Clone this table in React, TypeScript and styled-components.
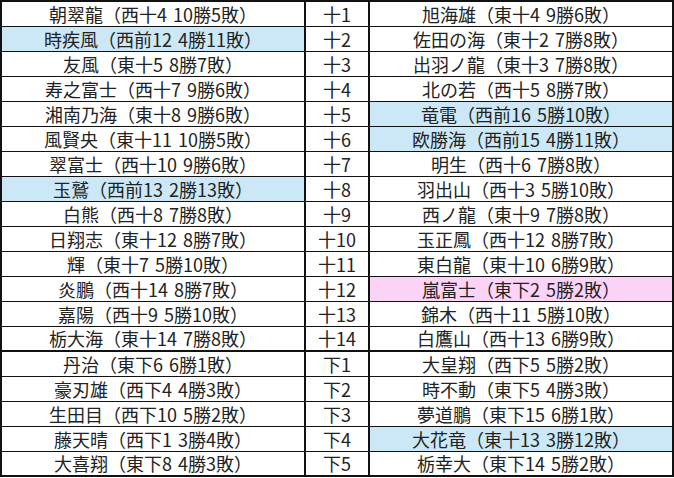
import React from "react";
import styled, { createGlobalStyle } from "styled-components";

type Tone = "blue" | "pink" | undefined;

interface Bout {
  left: string;
  rank: string;
  right: string;
  leftTone?: Tone;
  rightTone?: Tone;
}

const bouts: Bout[] = [
  { left: "朝翠龍（西十4 10勝5敗）", rank: "十1", right: "旭海雄（東十4 9勝6敗）" },
  { left: "時疾風（西前12 4勝11敗）", rank: "十2", right: "佐田の海（東十2 7勝8敗）", leftTone: "blue" },
  { left: "友風（東十5 8勝7敗）", rank: "十3", right: "出羽ノ龍（東十3 7勝8敗）" },
  { left: "寿之富士（西十7 9勝6敗）", rank: "十4", right: "北の若（西十5 8勝7敗）" },
  { left: "湘南乃海（東十8 9勝6敗）", rank: "十5", right: "竜電（西前16 5勝10敗）", rightTone: "blue" },
  { left: "風賢央（東十11 10勝5敗）", rank: "十6", right: "欧勝海（西前15 4勝11敗）", rightTone: "blue" },
  { left: "翠富士（西十10 9勝6敗）", rank: "十7", right: "明生（西十6 7勝8敗）" },
  { left: "玉鷲（西前13 2勝13敗）", rank: "十8", right: "羽出山（西十3 5勝10敗）", leftTone: "blue" },
  { left: "白熊（西十8 7勝8敗）", rank: "十9", right: "西ノ龍（東十9 7勝8敗）" },
  { left: "日翔志（東十12 8勝7敗）", rank: "十10", right: "玉正鳳（西十12 8勝7敗）" },
  { left: "輝（東十7 5勝10敗）", rank: "十11", right: "東白龍（東十10 6勝9敗）" },
  { left: "炎鵬（西十14 8勝7敗）", rank: "十12", right: "嵐富士（東下2 5勝2敗）", rightTone: "pink" },
  { left: "嘉陽（西十9 5勝10敗）", rank: "十13", right: "錦木（西十11 5勝10敗）" },
  { left: "栃大海（東十14 7勝8敗）", rank: "十14", right: "白鷹山（西十13 6勝9敗）" },
  { left: "丹治（東下6 6勝1敗）", rank: "下1", right: "大皇翔（西下5 5勝2敗）" },
  { left: "豪刃雄（西下4 4勝3敗）", rank: "下2", right: "時不動（東下5 4勝3敗）" },
  { left: "生田目（西下10 5勝2敗）", rank: "下3", right: "夢道鵬（東下15 6勝1敗）" },
  { left: "藤天晴（西下1 3勝4敗）", rank: "下4", right: "大花竜（東十13 3勝12敗）", rightTone: "blue" },
  { left: "大喜翔（東下8 4勝3敗）", rank: "下5", right: "栃幸大（東下14 5勝2敗）" },
];

const GlobalStyle = createGlobalStyle`
  html, body {
    margin: 0;
    padding: 0;
    background: #ffffff;
  }
`;

const Table = styled.table`
  width: 674px;
  border-collapse: collapse;
  table-layout: fixed;
  border: 2px solid #111111;
  font-family: "Noto Sans CJK JP", "Noto Sans", sans-serif;
  font-size: 18px;
  font-weight: 400;
  word-spacing: 2px;
  color: #222222;
`;

const Row = styled.tr<{ $split?: boolean }>`
  height: 25px;
  border-top: ${(p) => (p.$split ? "2px" : "1px")} solid #111111;
`;

const Cell = styled.td<{ $tone?: Tone }>`
  padding: 0;
  text-align: center;
  vertical-align: middle;
  line-height: 22px;
  white-space: nowrap;
  border-left: 2px solid #111111;
  background: ${(p) =>
    p.$tone === "blue" ? "#cce8f6" : p.$tone === "pink" ? "#fbd3f6" : "#ffffff"};
`;

export default function App() {
  return (
    <>
      <GlobalStyle />
      <Table>
        <colgroup>
          <col style={{ width: 304 }} />
          <col style={{ width: 64 }} />
          <col />
        </colgroup>
        <tbody>
          {bouts.map((b, i) => (
            <Row key={b.rank} $split={i === 14}>
              <Cell $tone={b.leftTone}>{b.left}</Cell>
              <Cell>{b.rank}</Cell>
              <Cell $tone={b.rightTone}>{b.right}</Cell>
            </Row>
          ))}
        </tbody>
      </Table>
    </>
  );
}
